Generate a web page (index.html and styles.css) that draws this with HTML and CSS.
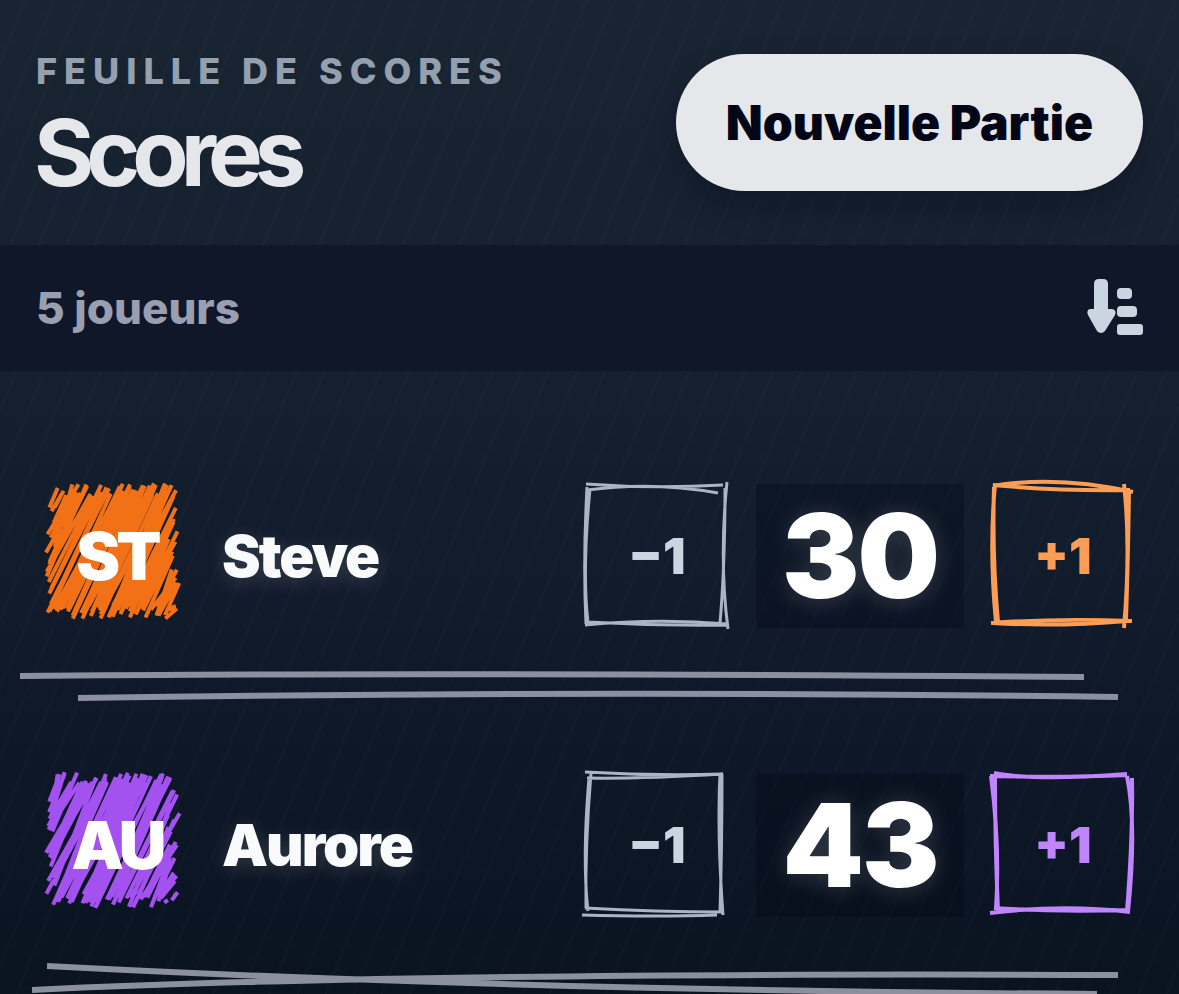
FILE: index.html
```html
<!DOCTYPE html>
<html lang="fr">
<head>
    <meta charset="UTF-8">
    <meta name="viewport" content="width=device-width, initial-scale=1.0">
    <title>Scores</title>
    <link rel="stylesheet" href="styles.css">
</head>
<body>
    <header class="header">
        <div class="heading">
            <p class="eyebrow">Feuille de scores</p>
            <h1 class="title">Scores</h1>
        </div>
        <button class="new-game" type="button">Nouvelle Partie</button>
    </header>

    <div class="toolbar">
        <p class="count">5 joueurs</p>
        <button class="sort" type="button" aria-label="Trier les joueurs">
            <svg viewBox="0 0 56 58" width="56" height="58" fill="currentColor">
                <path d="M12 0h4q5 0 5 5v25h4q5 1 3 6L18 52q-4 4-8 0L1 36q-2-5 2-6h4V5q0-5 5-5z"/>
                <rect x="30" y="9" width="15" height="11" rx="4"/>
                <rect x="30" y="27" width="20" height="11" rx="4"/>
                <rect x="30" y="45" width="26" height="11" rx="3"/>
            </svg>
        </button>
    </div>

    <main class="players">
        <section class="player orange">
            <div class="player-row">
                <div class="avatar">
                    <svg class="scribble" viewBox="0 0 152 152" data-seed="7"><path/></svg>
                    <span class="initials">ST</span>
                </div>
                <h2 class="name">Steve</h2>
                <div class="controls">
                    <button class="step" type="button">
                        <svg class="sketch" viewBox="0 0 160 160">
                            <path d="M9 8Q76 13 146 9M10 14Q76 5 141 17M150 6Q142 84 151 153M148 12Q148 90 143 147M8 149Q80 142 151 148M10 146Q80 150 151 149M10 11Q6 84 9 148M13 13Q5 95 11 147"/>
                        </svg>
                        −1
                    </button>
                    <output class="score">30</output>
                    <button class="step plus" type="button">
                        <svg class="sketch" viewBox="0 0 160 160">
                            <path d="M10 10Q74 -1 150 16M10 9Q74 15 147 14M141 8Q148 70 141 152M146 14Q145 84 143 144M8 147Q74 142 149 145M10 147Q74 151 144 145M12 8Q6 75 13 146M11 11Q9 80 15 146"/>
                        </svg>
                        +1
                    </button>
                </div>
            </div>
            <svg class="rule" viewBox="0 0 1179 32" preserveAspectRatio="none">
                <path d="M20 8Q400 4 1084 9M78 30Q600 22 1118 29"/>
            </svg>
        </section>

        <section class="player purple">
            <div class="player-row">
                <div class="avatar">
                    <svg class="scribble" viewBox="0 0 152 152" data-seed="23"><path/></svg>
                    <span class="initials">AU</span>
                </div>
                <h2 class="name">Aurore</h2>
                <div class="controls">
                    <button class="step" type="button">
                        <svg class="sketch" viewBox="0 0 160 160">
                            <path d="M8 7Q76 11 146 9M10 13Q60 14 146 9M14 8Q8 80 9 143M12 13Q5 95 11 146M143 9Q140 70 146 150M145 9Q145 80 143 148M8 143Q80 147 146 147M5 150Q80 152 140 150"/>
                        </svg>
                        −1
                    </button>
                    <output class="score">43</output>
                    <button class="step plus" type="button">
                        <svg class="sketch" viewBox="0 0 160 160">
                            <path d="M11 8Q50 16 144 9M7 11Q80 13 144 10M8 11Q17 80 13 145M12 11Q12 80 15 146M144 11Q154 60 145 147M149 13Q150 70 144 146M7 148Q80 139 147 147M11 143Q70 147 146 145"/>
                        </svg>
                        +1
                    </button>
                </div>
            </div>
            <svg class="rule" viewBox="0 0 1179 32" preserveAspectRatio="none">
                <path d="M32 33Q400 15 1118 18M47 9Q500 33 1097 37"/>
            </svg>
        </section>
    </main>

    <script src="script.js"></script>
</body>
</html>
```
FILE: styles.css
```css
* {
    box-sizing: border-box;
    margin: 0;
}
body {
    font-family: Inter, "Liberation Sans", sans-serif;
    background:
        repeating-linear-gradient(112deg, transparent 0 22px, rgba(148, 163, 184, 0.03) 24px, transparent 26px),
        linear-gradient(180deg, #192433 0%, #14202e 40%, #10192a 68%, #0a1320 100%);
    color: #f8fafc;
    min-height: 100vh;
    overflow-x: hidden;
}
button {
    font-family: inherit;
    border: 0;
    cursor: pointer;
}
.header {
    display: flex;
    align-items: center;
    justify-content: space-between;
    padding: 54px 36px;
}
.eyebrow {
    font-size: 36px;
    line-height: 32px;
    font-weight: 800;
    letter-spacing: 7px;
    text-transform: uppercase;
    color: #94a0ae;
}
.title {
    margin-top: 28px;
    margin-left: -2px;
    font-size: 92px;
    line-height: 76px;
    font-weight: 700;
    letter-spacing: -8px;
    color: #e5e7eb;
}
.new-game {
    padding: 40px 50px;
    font-size: 48px;
    line-height: 57px;
    font-weight: 900;
    color: #020617;
    background: #e5e7eb;
    border-radius: 69px;
    box-shadow: 0 16px 32px rgba(2, 6, 23, 0.3);
}
.toolbar {
    display: flex;
    align-items: center;
    justify-content: space-between;
    padding: 34px 36px;
    background: #101729;
}
.count {
    font-size: 44px;
    line-height: 58px;
    font-weight: 800;
    color: #999fb0;
}
.sort {
    display: flex;
    padding: 0;
    background: none;
    color: #cbd5e1;
}
.players {
    padding-top: 40px;
}
.orange {
    --fill: #f37116;
    --accent: #fb9d55;
}
.purple {
    --fill: #a352f0;
    --accent: #c084fc;
}
.player {
    padding-top: 73px;
}
.player-row {
    display: flex;
    align-items: center;
    padding: 0 44px 0 36px;
}
.avatar {
    position: relative;
    display: flex;
    align-items: center;
    justify-content: center;
    width: 162px;
    height: 144px;
    margin-right: 24px;
}
.scribble {
    position: absolute;
    left: 0;
    top: -8px;
    width: 152px;
    height: 152px;
    fill: none;
    stroke: var(--fill);
    stroke-width: 4px;
}
.initials {
    position: relative;
    font-size: 66px;
    line-height: 80px;
    font-weight: 900;
    letter-spacing: -4px;
    color: #ffffff;
}
.name {
    flex: 1;
    font-size: 58px;
    line-height: 72px;
    font-weight: 900;
    letter-spacing: -2px;
    text-shadow: 0 4px 20px rgba(248, 250, 252, 0.16);
}
.controls {
    display: flex;
    gap: 27px;
}
.step {
    position: relative;
    width: 144px;
    height: 144px;
    padding: 0;
    font-size: 50px;
    font-weight: 900;
    color: #cbd5e1;
    background: none;
}
.sketch {
    position: absolute;
    top: -8px;
    left: -8px;
    width: 160px;
    height: 160px;
    fill: none;
    stroke: #aab4c3;
    stroke-width: 3px;
}
.plus {
    color: var(--accent);
}
.plus .sketch {
    stroke: var(--accent);
    stroke-width: 4px;
}
.score {
    width: 208px;
    font-size: 116px;
    line-height: 144px;
    font-weight: 900;
    letter-spacing: -2px;
    text-align: center;
    color: #ffffff;
    background: rgba(4, 10, 24, 0.35);
    text-shadow: 0 2px 24px rgba(248, 250, 252, 0.18);
}
.rule {
    display: block;
    width: 100%;
    height: 32px;
    margin-top: 40px;
    overflow: visible;
    fill: none;
    stroke: #8a909e;
    stroke-width: 6px;
}
```
FILE: script.js
```js
// Hand-drawn hatching behind the initials
function randomFrom(seed) {
    let s = seed;
    return () => {
        s = (s * 16807) % 2147483647;
        return s / 2147483647;
    };
}

function scribblePath(seed) {
    const rand = randomFrom(seed * 7919);
    const jitter = n => (rand() - 0.5) * n;
    const min = 14;
    const max = 136;
    const slope = 0.47; // dx for each unit of dy
    const end = max + slope * (max - min);
    let d = '';

    // each hatch is a stroke up, then a looser one back down
    for (let c = min + 8; c < end - 3; c += 8) {
        const topY = Math.max(min, min + (c - max) / slope);
        const bottomY = Math.min(max, min + (c - min) / slope);
        const point = (y, shift) => {
            const x = c + shift - slope * (y - min) + jitter(9);
            return x.toFixed(1) + ' ' + (y + jitter(14)).toFixed(1);
        };
        d += 'M' + point(bottomY, 0) + 'L' + point(topY, 0);
        d += 'M' + point(topY, 2) + 'L' + point(bottomY, 2);
        d += 'M' + point(topY, 4) + 'L' + point(bottomY, 0);
    }
    return d;
}

document.querySelectorAll('.scribble').forEach(svg => {
    svg.querySelector('path').setAttribute('d', scribblePath(Number(svg.dataset.seed)));
});
```
